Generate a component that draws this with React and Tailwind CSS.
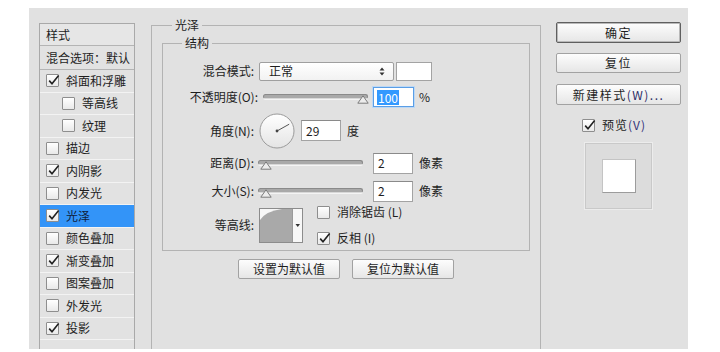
import React from "react";

const font = { fontFamily: '"Noto Sans CJK SC", "Noto Sans", sans-serif' };

function Check({ on }) {
  return (
    <span className="relative flex h-[13px] w-[13px] shrink-0 items-center justify-center rounded-[1px] border border-[#8e8e8e] bg-linear-to-b from-white to-[#e9e9e9]">
      {on && (
        <svg width="13" height="13" viewBox="0 0 13 13" className="absolute left-[0px] top-[-1px]">
          <path d="M2.2 6.6 L5 9.8 L11.6 1.6" fill="none" stroke="#222" strokeWidth="1.6" />
        </svg>
      )}
    </span>
  );
}

const layers = [
  { name: "斜面和浮雕", on: true },
  { name: "等高线", on: false, sub: true },
  { name: "纹理", on: false, sub: true },
  { name: "描边", on: false },
  { name: "内阴影", on: true },
  { name: "内发光", on: false },
  { name: "光泽", on: true, active: true },
  { name: "颜色叠加", on: false },
  { name: "渐变叠加", on: true },
  { name: "图案叠加", on: false },
  { name: "外发光", on: false },
  { name: "投影", on: true },
];

function Slider({ thumb }) {
  return (
    <div className="relative h-[10px] w-[105px] shrink-0">
      <div className="mt-[1px] h-[5px] w-full rounded-full border border-[#8a8a8a] border-b-[#d8d8d8] bg-[#a9a9a9] shadow-[0_1px_0_#f4f4f4]" />
      <svg width="12" height="9" viewBox="0 0 12 9" className="absolute bottom-0" style={{ left: thumb }}>
        <path d="M6 0.8 L11.2 8.2 L0.8 8.2 Z" fill="#ececec" stroke="#7c7c7c" strokeWidth="1" />
      </svg>
    </div>
  );
}

function Field({ value, w = "w-[40px]" }) {
  return (
    <div className={`flex h-[21px] ${w} shrink-0 items-center border border-[#a3a3a3] border-t-[#8a8a8a] bg-white pl-[4px] text-[12px] text-[#1e1e1e]`}>
      {value}
    </div>
  );
}

function Btn({ children, main, className = "" }) {
  return (
    <div
      className={`flex items-center justify-center rounded-[2px] bg-linear-to-b from-[#fdfdfd] to-[#e6e6e6] text-[12px] text-[#1e1e1e] ${
        main ? "border border-[#5f5f5f] shadow-[inset_0_0_0_1px_#b9b9b9]" : "border border-[#a2a2a2]"
      } ${className}`}
    >
      {children}
    </div>
  );
}

export default function App() {
  return (
    <div className="h-[352px] w-[720px] overflow-hidden bg-white pl-[29px] pt-[8px]" style={font}>
      <div className="flex h-[341px] w-[659px] overflow-hidden bg-[#e1e1e1] text-[12px] text-[#1e1e1e]">
        {/* style list */}
        <div className="ml-[10px] mt-[15px] h-[340px] w-[96px] shrink-0 border border-[#a9a9a9] bg-[#e2e2e2]">
          <div className="flex h-[22px] items-center border-b border-[#b4b4b4] bg-[#e6e6e6] pl-[6px]">样式</div>
          <div className="flex h-[24px] items-center border-b border-[#b4b4b4] pl-[6px]">混合选项：默认</div>
          {layers.map((l) => (
            <div
              key={l.name}
              className={`flex h-[22.5px] items-center gap-[7px] border-b border-[#f3f3f3] ${
                l.sub ? "pl-[22px]" : "pl-[6px]"
              } ${l.active ? "bg-[#3394f8]" : ""}`}
            >
              <Check on={l.on} />
              <span className={l.active ? "text-[#10203a]" : ""}>{l.name}</span>
            </div>
          ))}
        </div>

        {/* main panel */}
        <fieldset className="ml-[16px] mt-[9px] h-[360px] w-[390px] shrink-0 border border-[#b3b3b3]">
          <legend className="ml-[20px] px-[3px] leading-[16px]">光泽</legend>
          <fieldset className="mx-[10px] mt-[2px] h-[216px] border border-[#b3b3b3] pt-[9px]">
            <legend className="ml-[19px] px-[3px] leading-[16px]">结构</legend>

            <div className="flex h-[22px] items-center">
              <div className="w-[91px] shrink-0 text-right">混合模式:</div>
              <div className="ml-[5px] flex h-[19px] w-[135px] items-center justify-between rounded-[2px] border border-[#9f9f9f] bg-linear-to-b from-white to-[#f2f2f2] pl-[9px] pr-[8px]">
                <span>正常</span>
                <svg width="6" height="9" viewBox="0 0 6 9">
                  <path d="M3 0.5 L5.5 3.5 L0.5 3.5 Z M3 8.5 L5.5 5.5 L0.5 5.5 Z" fill="#333" />
                </svg>
              </div>
              <div className="ml-[2px] h-[19px] w-[36px] border border-[#a3a3a3] bg-white" />
            </div>

            <div className="flex h-[30px] items-center">
              <div className="w-[96px] shrink-0 pr-[1px] text-right">不透明度(O):</div>
              <div className="ml-[4px] pt-[3px]">
                <Slider thumb="94px" />
              </div>
              <div className="ml-[5px] flex h-[20px] w-[41px] items-center border border-[#5a9ee6] bg-white pl-[3px] shadow-[0_0_0_1px_#bcd8f5]">
                <span className="bg-[#3399ff] px-[1px] leading-[15px] text-white">100</span>
              </div>
              <span className="ml-[5px]">%</span>
            </div>

            <div className="flex h-[37px] items-center">
              <div className="w-[91px] shrink-0 text-right">角度(N):</div>
              <svg width="36" height="36" viewBox="0 0 36 36" className="ml-[5px] shrink-0">
                <defs>
                  <linearGradient id="dial" x1="0" y1="0" x2="0" y2="1">
                    <stop offset="0" stopColor="#ffffff" />
                    <stop offset="1" stopColor="#e4e4e4" />
                  </linearGradient>
                </defs>
                <circle cx="18" cy="18" r="17" fill="url(#dial)" stroke="#9a9a9a" />
                <line x1="18" y1="18" x2="30.2" y2="11.2" stroke="#555" strokeWidth="1" />
                <circle cx="18" cy="18" r="1.4" fill="#444" />
              </svg>
              <div className="ml-[6px]">
                <Field value="29" />
              </div>
              <span className="ml-[6px]">度</span>
            </div>

            <div className="flex h-[28px] items-center">
              <div className="w-[91px] shrink-0 text-right">距离(D):</div>
              <div className="ml-[4px] pt-[3px]">
                <Slider thumb="2px" />
              </div>
              <div className="ml-[10px]">
                <Field value="2" />
              </div>
              <span className="ml-[6px]">像素</span>
            </div>

            <div className="flex h-[28px] items-center">
              <div className="w-[91px] shrink-0 text-right">大小(S):</div>
              <div className="ml-[4px] pt-[3px]">
                <Slider thumb="2px" />
              </div>
              <div className="ml-[10px]">
                <Field value="2" />
              </div>
              <span className="ml-[6px]">像素</span>
            </div>

            <div className="flex h-[40px] items-center">
              <div className="w-[91px] shrink-0 text-right">等高线:</div>
              <svg width="44" height="35" viewBox="0 0 44 35" className="ml-[5px] shrink-0">
                <rect x="0.5" y="0.5" width="43" height="34" fill="#f7f7f7" stroke="#8c8c8c" />
                <path d="M1 12 Q7 3 23 1 L33 1 L33 34 L1 34 Z" fill="#a9a9a9" />
                <line x1="33.5" y1="1" x2="33.5" y2="34" stroke="#9a9a9a" />
                <path d="M36.5 16 L41 16 L38.75 19 Z" fill="#333" />
              </svg>
              <div className="ml-[14px] flex flex-col gap-[8px]">
                <div className="flex items-center gap-[7px]">
                  <Check on={false} />
                  <span>消除锯齿 (L)</span>
                </div>
                <div className="flex items-center gap-[7px]">
                  <Check on={true} />
                  <span>反相 (I)</span>
                </div>
              </div>
            </div>
          </fieldset>

          <div className="mt-[8px] flex justify-center gap-[12px]">
            <Btn className="h-[20px] w-[102px]">设置为默认值</Btn>
            <Btn className="h-[20px] w-[102px]">复位为默认值</Btn>
          </div>
        </fieldset>

        {/* right column */}
        <div className="ml-[15px] mt-[14px] flex w-[125px] shrink-0 flex-col">
          <Btn main className="h-[21px] tracking-[1.5px]">确定</Btn>
          <Btn className="mt-[10px] h-[20px] tracking-[1.5px]">复位</Btn>
          <Btn className="mt-[11px] h-[21px] tracking-[1.5px]">
            新建样式<span className="text-[#2c2c66]">(W)...</span>
          </Btn>
          <div className="ml-[26px] mt-[11px] flex items-center gap-[7px]">
            <Check on={true} />
            <span className="tracking-[1px]">
              预览<span className="text-[#33337a]">(V)</span>
            </span>
          </div>
          <div className="ml-[29px] mt-[9px] flex h-[66px] w-[67px] items-center justify-center border border-[#c9c9c9] bg-[#dcdcdc] shadow-[0_0_0_1px_#ececec]">
            <div className="h-[34px] w-[34px] border border-[#9c9c9c] border-l-[#c4c4c4] border-t-[#c4c4c4] bg-white" />
          </div>
        </div>
      </div>
    </div>
  );
}
